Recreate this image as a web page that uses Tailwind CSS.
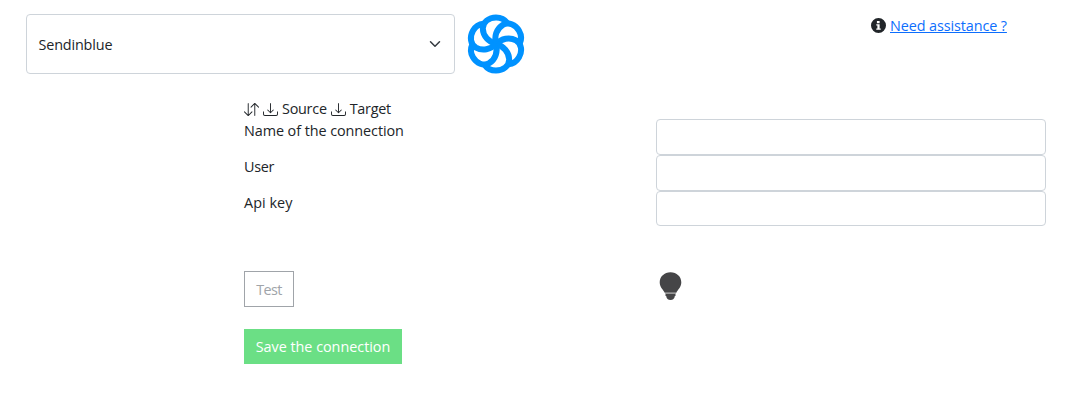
<!DOCTYPE html>
<html lang="en">
<head>
<meta charset="utf-8">
<title>Connection</title>
<script src="https://cdn.jsdelivr.net/npm/@tailwindcss/browser@4"></script>
</head>
<body class="bg-white font-['Open_Sans','Noto_Sans',sans-serif] text-[14.4px] leading-[22px] text-[#212529]">
<header class="flex h-[108px] items-start pt-3.5 pl-[26px]">
  <button class="flex h-[60px] w-[429px] items-center justify-between rounded border border-[#ced4da] pr-[13px] pl-[11.5px]">
    <span class="pt-0.5 tracking-[-0.16px]">Sendinblue</span>
    <svg class="size-3" viewBox="0 0 16 16" fill="none" stroke="#343a40" stroke-width="2" stroke-linecap="round" stroke-linejoin="round"><path d="m2 5 6 6 6-6"/></svg>
  </button>
  <svg class="ml-[13px] h-[60px] w-14 shrink-0 overflow-visible" viewBox="-28 -30 56 60" fill="none" stroke="#0092ff" stroke-width="6" stroke-linejoin="round">
    <defs><path id="petal" d="M0 0C-7.500-2-13-8-13.200-15.500C-13.200-22-7-26.600 0-26.600C4.800-26.600 8.800-24.600 11.300-21"/></defs>
    <use href="#petal"/><use href="#petal" transform="rotate(60)"/><use href="#petal" transform="rotate(120)"/><use href="#petal" transform="rotate(180)"/><use href="#petal" transform="rotate(240)"/><use href="#petal" transform="rotate(300)"/>
  </svg>
  <div class="mt-px ml-[347px] flex items-center">
    <svg class="mr-1 size-[15px] -translate-y-px" viewBox="0 0 16 16" fill="currentColor"><path fill-rule="evenodd" d="M8 16A8 8 0 1 0 8 0a8 8 0 0 0 0 16M6.300 3.300h2.900v2.200H6.300zM5.600 6.600h3.600v4.500h1.200v1.500H5.600v-1.500h1.200v-3H5.600z"/></svg>
    <a href="#" class="tracking-[-0.1px] text-[#0d6efd] underline decoration-1 underline-offset-1">Need assistance ?</a>
  </div>
</header>
<main class="-mt-2.5 grid grid-cols-[412px_390px] pl-[244px]">
  <div>
    <div class="flex h-[22px] items-center">
      <svg class="mr-1 size-[15px]" viewBox="0 0 16 16" fill="currentColor"><path fill-rule="evenodd" d="M11.5 15a.5.5 0 0 0 .5-.5V2.707l3.146 3.147a.5.5 0 0 0 .708-.708l-4-4a.5.5 0 0 0-.708 0l-4 4a.5.5 0 1 0 .708.708L11 2.707V14.500a.5.5 0 0 0 .5.5m-7-14a.5.5 0 0 1 .5.5v11.793l3.146-3.147a.5.5 0 0 1 .708.708l-4 4a.5.5 0 0 1-.708 0l-4-4a.5.5 0 0 1 .708-.708L4 13.293V1.500a.5.5 0 0 1 .5-.5"/></svg>
      <svg class="mr-1 size-[15px]" viewBox="0 0 16 16" fill="currentColor"><path d="M.5 9.900a.5.5 0 0 1 .5.5v2.500a1 1 0 0 0 1 1h12a1 1 0 0 0 1-1v-2.500a.5.5 0 0 1 1 0v2.500a2 2 0 0 1-2 2H2a2 2 0 0 1-2-2v-2.500a.5.5 0 0 1 .5-.5"/><path d="M7.646 11.854a.5.5 0 0 0 .708 0l3-3a.5.5 0 0 0-.708-.708L8.500 10.293V1.500a.5.5 0 0 0-1 0v8.793L5.354 8.146a.5.5 0 1 0-.708.708z"/></svg>
      <span class="mr-1 tracking-[-0.25px]">Source</span>
      <svg class="mr-1 size-[15px]" viewBox="0 0 16 16" fill="currentColor"><path d="M.5 9.900a.5.5 0 0 1 .5.5v2.500a1 1 0 0 0 1 1h12a1 1 0 0 0 1-1v-2.500a.5.5 0 0 1 1 0v2.500a2 2 0 0 1-2 2H2a2 2 0 0 1-2-2v-2.500a.5.5 0 0 1 .5-.5"/><path d="M7.646 11.854a.5.5 0 0 0 .708 0l3-3a.5.5 0 0 0-.708-.708L8.500 10.293V1.500a.5.5 0 0 0-1 0v8.793L5.354 8.146a.5.5 0 1 0-.708.708z"/></svg>
      <span class="tracking-[-0.3px]">Target</span>
    </div>
    <div class="flex flex-col gap-3.5">
      <label for="name" class="tracking-[-0.07px]">Name of the connection</label>
      <label for="user" class="tracking-[-0.3px]">User</label>
      <label for="key" class="tracking-[0.05px]">Api key</label>
    </div>
    <button class="mt-[57px] block h-9 w-[50px] border border-[#a0a4a9] pt-0.5 tracking-[-0.6px] text-[#a0a4a9]">Test</button>
    <button class="mt-[22px] block h-[35px] w-[158px] bg-[#6bdf85] tracking-[-0.03px] text-white">Save the connection</button>
  </div>
  <div class="flex flex-col pt-[21px]">
    <input id="name" class="h-9 w-full rounded border border-[#ced4da]">
    <input id="user" class="h-9 w-full rounded border border-[#ced4da]">
    <input id="key" class="h-[35px] w-full rounded border border-[#ced4da]">
    <svg class="mt-[45px] ml-[3px] h-[30px] w-[23px]" viewBox="0 0 23 30" fill="#454547"><path d="M11.500 1.200C5.300 1.200.700 5.500.700 11.300c0 5.100 3.500 7.300 5 10.400h11.600c1.500-3.100 5-5.300 5-10.400C22.300 5.500 17.700 1.200 11.500 1.200"/><path d="M6.200 21.700h10.600v1.300H6.200z" fill="#999"/><path d="M6.500 23h10v2h-10z"/><path d="M7.200 25h8.600c-.3 2.800-1.800 4-4.300 4S7.500 27.800 7.200 25"/></svg>
  </div>
</main>
</body>
</html>
